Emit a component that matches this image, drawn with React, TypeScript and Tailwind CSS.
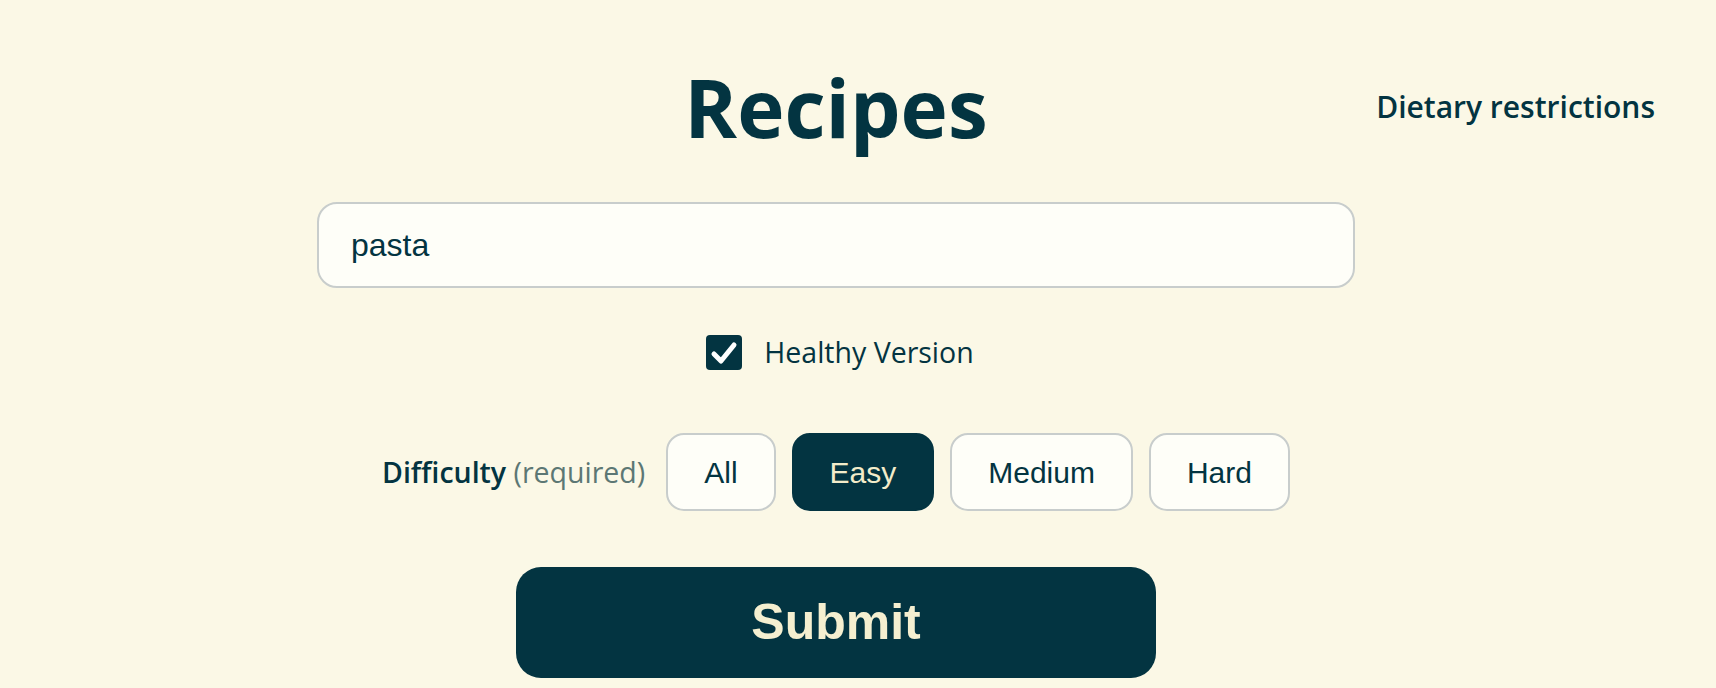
import React, { useState } from "react";

const levels = ["All", "Easy", "Medium", "Hard"];

export default function App() {
  const [query, setQuery] = useState("pasta");
  const [healthy, setHealthy] = useState(true);
  const [level, setLevel] = useState("Easy");

  return (
    <div className="relative min-h-screen bg-[#fbf8e6] pr-[44px] text-[#033441] font-['Open_Sans',sans-serif]">
      {/* Dietary dropdown trigger */}
      <button className="absolute right-[61px] top-[86px] text-[30px] font-semibold leading-[41px] text-[#033441]">
        Dietary restrictions
      </button>

      <div className="flex flex-col items-center">
        <h1 className="mt-[67px] text-[80px] font-bold leading-none">Recipes</h1>

        <input
          value={query}
          onChange={(e) => setQuery(e.target.value)}
          className="mt-[55px] h-[86px] w-[1038px] rounded-[20px] border-2 border-[#c8cdcc] bg-[#fefef8] pl-[32px] font-['Liberation_Sans',Arial,sans-serif] text-[32px] text-[#033441] outline-none"
        />

        <label className="mt-[47px] flex h-[35px] cursor-pointer items-center gap-[22px] pl-[8px]">
          <span
            onClick={() => setHealthy(!healthy)}
            className={
              healthy
                ? "flex h-[35px] w-[36px] items-center justify-center rounded-[4px] bg-[#033441]"
                : "flex h-[35px] w-[36px] items-center justify-center rounded-[4px] border-2 border-[#c8cdcc] bg-white"
            }
          >
            {healthy && (
              <svg width="28" height="26" viewBox="0 0 28 26">
                <path d="M4 14 L11 21 L24 5" fill="none" stroke="#ffffff" strokeWidth="5" strokeLinecap="round" strokeLinejoin="round" />
              </svg>
            )}
          </span>
          <span className="text-[28.5px] leading-none">Healthy Version</span>
        </label>

        <div className="mt-[63px] flex items-center">
          <div className="mr-[21px] whitespace-nowrap text-[28.5px]">
            <span className="font-semibold">Difficulty</span>{" "}
            <span className="text-[#5c7774]">(required)</span>
          </div>
          <div className="flex gap-[16px]">
            {levels.map((l) => (
              <button
                key={l}
                onClick={() => setLevel(l)}
                className={
                  l === level
                    ? "flex h-[78px] items-center rounded-[18px] border-2 border-[#033441] bg-[#033441] px-[36px] font-['Liberation_Sans',Arial,sans-serif] text-[30px] text-[#f3ecca]"
                    : "flex h-[78px] items-center rounded-[18px] border-2 border-[#c8cdcc] bg-[#fefef8] px-[36px] font-['Liberation_Sans',Arial,sans-serif] text-[30px] text-[#033441]"
                }
              >
                {l}
              </button>
            ))}
          </div>
        </div>

        <button className="mt-[56px] h-[111px] w-[640px] rounded-[25px] bg-[#033441] font-['Liberation_Sans',Arial,sans-serif] text-[50px] font-bold text-[#f5efd0]">
          Submit
        </button>
      </div>
    </div>
  );
}
